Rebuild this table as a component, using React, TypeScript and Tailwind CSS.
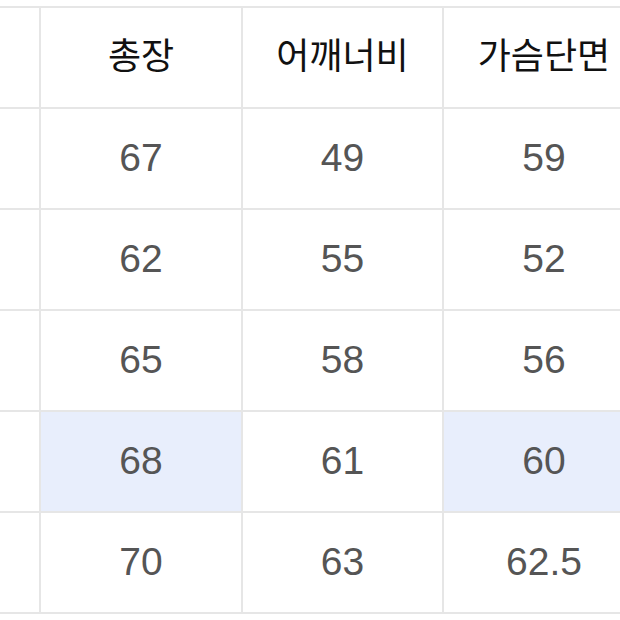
const rows: { cells: string[]; highlight?: number[] }[] = [
  { cells: ["67", "49", "59"] },
  { cells: ["62", "55", "52"] },
  { cells: ["65", "58", "56"] },
  { cells: ["68", "61", "60"], highlight: [0, 2] },
  { cells: ["70", "63", "62.5"] },
];

const headers = ["총장", "어깨너비", "가슴단면"];

export default function App() {
  return (
    <div
      className="w-[620px] h-[620px] overflow-hidden bg-white"
      style={{ fontFamily: '"Liberation Sans", "Noto Sans CJK KR", sans-serif' }}
    >
      <div className="mt-[6px] w-[700px] bg-[#e6e6e6] py-[2px]">
        <div className="grid grid-cols-[39px_200px_199px_200px_1fr] auto-rows-[99px] gap-[2px]">
          <div className="bg-white" />
          {headers.map((h) => (
            <div
              key={h}
              className="bg-white flex items-center justify-center text-[36px] text-[#111] pb-[2px]"
            >
              {h}
            </div>
          ))}
          <div className="bg-white" />

          {rows.map((row, r) => (
            <div key={r} className="contents">
              <div className="bg-white" />
              {row.cells.map((c, i) => (
                <div
                  key={i}
                  className={`flex items-center justify-center text-[39px] text-[#555] ${
                    row.highlight?.includes(i) ? "bg-[#e8eefc]" : "bg-white"
                  }`}
                >
                  {c}
                </div>
              ))}
              <div className="bg-white" />
            </div>
          ))}
        </div>
      </div>
    </div>
  );
}
